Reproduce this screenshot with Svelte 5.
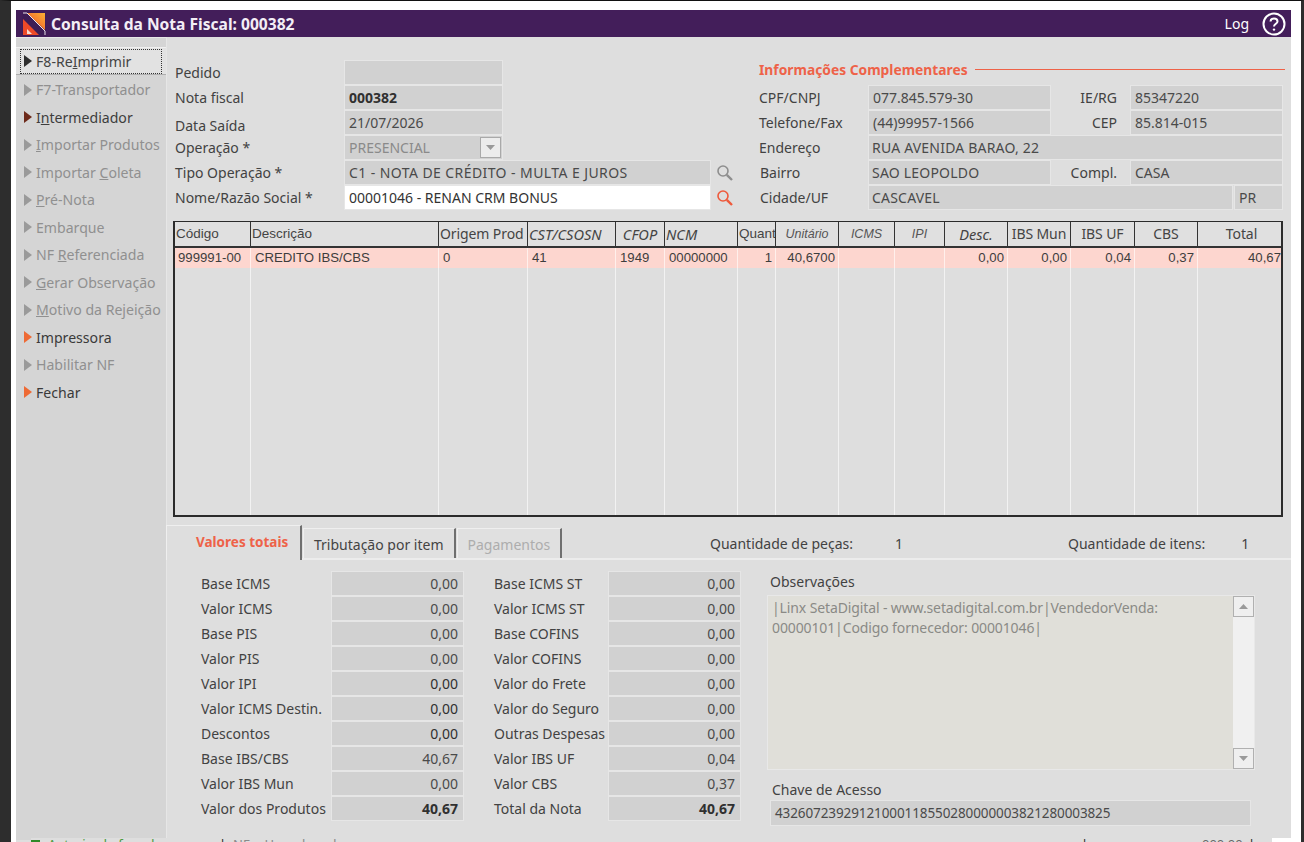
<script>
	const sideItems = [
		{ pre: "F8-Re", u: "I", label: "mprimir", state: "focus" },
		{ label: "F7-Transportador", state: "off" },
		{ pre: "I", u: "n", label: "termediador", state: "dark" },
		{ u: "I", label: "mportar Produtos", state: "off" },
		{ pre: "Importar ", u: "C", label: "oleta", state: "off" },
		{ u: "P", label: "ré-Nota", state: "off" },
		{ label: "Embarque", state: "off" },
		{ pre: "NF ", u: "R", label: "eferenciada", state: "off" },
		{ u: "G", label: "erar Observação", state: "off" },
		{ u: "M", label: "otivo da Rejeição", state: "off" },
		{ label: "Impressora", state: "on" },
		{ label: "Habilitar NF", state: "off" },
		{ label: "Fechar", state: "on" }
	];

	const columns = [
		{ name: "Código", w: 76, cls: "left" },
		{ name: "Descrição", w: 188, cls: "left" },
		{ name: "Origem Prod", w: 89, cls: "left wide-font" },
		{ name: "CST/CSOSN", w: 88, cls: "left it wide-font" },
		{ name: "CFOP", w: 49, cls: "it wide-font" },
		{ name: "NCM", w: 73, cls: "left it wide-font" },
		{ name: "Quant", w: 38, cls: "left" },
		{ name: "Unitário", w: 63, cls: "it thin" },
		{ name: "ICMS", w: 56, cls: "it thin" },
		{ name: "IPI", w: 50, cls: "it thin" },
		{ name: "Desc.", w: 63, cls: "it wide-font" },
		{ name: "IBS Mun", w: 63, cls: "wide-font" },
		{ name: "IBS UF", w: 64, cls: "wide-font" },
		{ name: "CBS", w: 63, cls: "wide-font" },
		{ name: "Total", w: 87, cls: "wide-font" }
	];
	const row = ["999991-00", "CREDITO IBS/CBS", "0", "41", "1949", "00000000", "1", "40,6700", "", "", "0,00", "0,00", "0,04", "0,37", "40,67"];
	const rowAlign = ["l", "l", "l", "l", "l", "l", "r", "r", "r", "r", "r", "r", "r", "r", "r"];

	const totalsA = [
		["Base ICMS", "0,00"], ["Valor ICMS", "0,00"], ["Base PIS", "0,00"], ["Valor PIS", "0,00"], ["Valor IPI", "0,00", "dark"],
		["Valor ICMS Destin.", "0,00", "dark"], ["Descontos", "0,00", "dark"], ["Base IBS/CBS", "40,67"], ["Valor IBS Mun", "0,00"], ["Valor dos Produtos", "40,67", "bold"]
	];
	const totalsB = [
		["Base ICMS ST", "0,00"], ["Valor ICMS ST", "0,00"], ["Base COFINS", "0,00"], ["Valor COFINS", "0,00"], ["Valor do Frete", "0,00"],
		["Valor do Seguro", "0,00"], ["Outras Despesas", "0,00"], ["Valor IBS UF", "0,04"], ["Valor CBS", "0,37"], ["Total da Nota", "40,67", "bold"]
	];
</script>

<div class="screen">
	<span class="desk-left"></span>
	<span class="desk-right"></span>
	<div class="window">
		<header class="titlebar">
			<svg class="logo" width="24" height="24" viewBox="0 0 24 24">
				<defs>
					<linearGradient id="lg" x1="0" y1="1" x2="1" y2="0">
						<stop offset="0" stop-color="#ee4a28"/>
						<stop offset="1" stop-color="#fbb034"/>
					</linearGradient>
				</defs>
				<rect x="0.5" y="0.5" width="23" height="23" fill="#3d1d55"/>
				<path d="M5 1H23V18Z" fill="url(#lg)"/>
				<path d="M1 7L17 23H1Z" fill="#ee4a28"/>
				<path d="M5 17L10 22H5Z" fill="#f6dcd2"/>
				<path d="M1 1H5L23 19V23" fill="none" stroke="#e9e2ea" stroke-width="1"/>
			</svg>
			<span class="title">Consulta da Nota Fiscal: 000382</span>
			<span class="log">Log</span>
			<svg class="help" width="24" height="24" viewBox="0 0 24 24" fill="none" stroke="#fff">
				<circle cx="12" cy="12" r="10.5" stroke-width="2"/>
				<path d="M8.5 9.5C8.5 7.5 10 6.5 12 6.5S15.5 7.7 15.5 9.4C15.5 11.6 12 12 12 14.6" stroke-width="2"/>
				<circle cx="12" cy="17.6" r="1.2" fill="#fff" stroke="none"/>
			</svg>
		</header>

		<div class="body">
			<nav class="side">
				{#each sideItems as item}
					<div class="side-item {item.state}">
						<span class="inner">
							<span class="tri"></span>
							<span>{item.pre ?? ""}{#if item.u}<u>{item.u}</u>{/if}{item.label}</span>
						</span>
					</div>
				{/each}
			</nav>

			<main class="main">
				<section class="top">
					<div class="form-left">
						<span class="lbl">Pedido</span><div class="fld short"></div>
						<span class="lbl">Nota fiscal</span><div class="fld short bold">000382</div>
						<span class="lbl low">Data Saída</span><div class="fld short">21/07/2026</div>
						<span class="lbl">Operação *</span>
						<div class="fld short muted select">PRESENCIAL
							<span class="dd"><svg width="9" height="5" viewBox="0 0 9 5"><path d="M0 0H9L4.5 5Z" fill="#999"/></svg></span>
						</div>
						<span class="lbl">Tipo Operação *</span>
						<div class="fld-wrap">
							<div class="fld wide spaced">C1 - NOTA DE CRÉDITO - MULTA E JUROS</div>
							<svg class="lens" width="18" height="18" viewBox="0 0 18 18" fill="none" stroke="#8e8e8e" stroke-width="1.6">
								<circle cx="7" cy="7" r="5"/><path d="M10.8 10.8L16 16" stroke-width="2.4"/>
							</svg>
						</div>
						<span class="lbl">Nome/Razão Social *</span>
						<div class="fld-wrap">
							<div class="fld wide white">00001046 - RENAN CRM BONUS</div>
							<svg class="lens" width="18" height="18" viewBox="0 0 18 18" fill="none" stroke="#ee5a3c" stroke-width="1.6">
								<circle cx="7" cy="7" r="5"/><path d="M10.8 10.8L16 16" stroke-width="2.4"/>
							</svg>
						</div>
					</div>

					<div class="form-right">
						<div class="info-head"><span>Informações Complementares</span><i></i></div>
						<div class="info-grid">
							<span class="lbl">CPF/CNPJ</span><div class="fld">077.845.579-30</div><span class="lbl r">IE/RG</span><div class="fld">85347220</div>
							<span class="lbl">Telefone/Fax</span><div class="fld">(44)99957-1566</div><span class="lbl r">CEP</span><div class="fld">85.814-015</div>
							<span class="lbl">Endereço</span><div class="fld span3 caps">RUA AVENIDA BARAO, 22</div>
							<span class="lbl ind">Bairro</span><div class="fld caps">SAO LEOPOLDO</div><span class="lbl r">Compl.</span><div class="fld">CASA</div>
							<span class="lbl ind">Cidade/UF</span>
							<div class="span3 city"><div class="fld grow caps">CASCAVEL</div><div class="fld uf">PR</div></div>
						</div>
					</div>
				</section>

				<section class="grid-box">
					<div class="grid-head">
						{#each columns as c}
							<div class="hcell {c.cls ?? ''}" style:width="{c.w}px">{c.name}</div>
						{/each}
					</div>
					<div class="grid-row">
						{#each columns as c, i}
							<div class="cell {rowAlign[i]}" style:width="{c.w}px">{row[i]}</div>
						{/each}
					</div>
					<div class="grid-rest">
						{#each columns as c}
							<div class="rest-col" style:width="{c.w}px"></div>
						{/each}
					</div>
				</section>

				<section class="tabs">
					<div class="tab active">Valores totais</div>
					<div class="tab">Tributação por item</div>
					<div class="tab disabled">Pagamentos</div>
					<div class="qty q1"><span>Quantidade de peças:</span><span>1</span></div>
					<div class="qty q2"><span>Quantidade de itens:</span><span>1</span></div>
				</section>

				<section class="bottom">
					<div class="totals first">
						{#each totalsA as t}
							<span class="lbl">{t[0]}</span><div class="fld num {t[2] ?? ''}">{t[1]}</div>
						{/each}
					</div>
					<div class="totals second">
						{#each totalsB as t}
							<span class="lbl">{t[0]}</span><div class="fld num {t[2] ?? ''}">{t[1]}</div>
						{/each}
					</div>
					<div class="obs">
						<span class="lbl obs-lbl">Observações</span>
						<div class="memo">
							<div class="memo-text">|Linx SetaDigital - www.setadigital.com.br|VendedorVenda:<br>00000101|Codigo fornecedor: 00001046|</div>
							<div class="scroll">
								<span class="sbtn"><svg width="9" height="5" viewBox="0 0 9 5"><path d="M4.5 0L9 5H0Z" fill="#9a9a9a"/></svg></span>
								<span class="strack"></span>
								<span class="sbtn"><svg width="9" height="5" viewBox="0 0 9 5"><path d="M0 0H9L4.5 5Z" fill="#9a9a9a"/></svg></span>
							</div>
						</div>
						<span class="lbl key-lbl">Chave de Acesso</span>
						<div class="fld key">43260723929121000118550280000003821280003825</div>
					</div>
				</section>

				<footer class="status">
					<span class="sq"></span>
					<span class="ok">Autorizado fora do prazo</span>
					<span class="sep">|</span>
					<span class="st-mid">NF-e Homologada</span>
					<span class="sep st-r">|</span>
					<span class="st-val">000,00</span>
					<span class="sep">|</span>
					<span class="st-end"></span>
				</footer>
			</main>
		</div>
	</div>
</div>

<style>
	:global(body) {
		margin: 0;
		background: #fff;
		overflow: hidden;
	}
	.screen {
		position: relative;
		width: 1304px;
		height: 842px;
		box-sizing: border-box;
		border-top: 1px solid #111;
		border-left: 11px solid #2d2d2d;
		border-right: 3px solid #2d2d2d;
		padding: 9px 10px 0 5px;
		overflow: hidden;
		font-family: "Noto Sans", "Open Sans", sans-serif;
		font-size: 14px;
		color: #3f3f3f;
	}
	.desk-left {
		position: absolute;
		left: -11px;
		top: 808px;
		width: 3px;
		height: 22px;
		background: #431e5a;
	}
	.desk-right {
		position: absolute;
		right: -3px;
		top: 820px;
		width: 3px;
		height: 22px;
		background: #431e5a;
	}
	.window {
		height: 832px;
		background: #dedede;
		display: flex;
		flex-direction: column;
	}
	.titlebar {
		height: 27px;
		flex: none;
		background: #431e5a;
		display: flex;
		align-items: center;
		color: #fff;
		padding: 0 6px;
	}
	.logo {
		margin-right: 5px;
		flex: none;
	}
	.title {
		font-weight: 700;
		font-size: 15.6px;
		color: #f3eef6;
	}
	.log {
		margin-left: auto;
		font-size: 14px;
		margin-right: 13px;
	}
	.help {
		margin-right: -1px;
	}
	.body {
		flex: 1;
		display: flex;
		min-height: 0;
	}
	.side {
		width: 150px;
		flex: none;
		background: #d5d5d5;
		padding-top: 9px;
		box-sizing: border-box;
		border-top: 1px solid #e8e8e8;
		margin-bottom: 2px;
	}
	.side-item {
		height: 27.5px;
		display: flex;
		align-items: center;
		padding-left: 8px;
		font-size: 14.1px;
		color: #909090;
		white-space: nowrap;
	}
	.side-item .inner {
		display: flex;
		align-items: center;
		gap: 4px;
	}
	.tri {
		width: 0;
		height: 0;
		border-left: 8px solid #9a9a9a;
		border-top: 6px solid transparent;
		border-bottom: 6px solid transparent;
	}
	.side-item.focus {
		background: #e2e2e2;
		color: #444;
		margin-right: -1px;
		border-bottom: 1px solid #aeaeae;
		border-top: 1px solid #f0f0f0;
		height: 26px;
		margin-bottom: 1px;
		padding-left: 5px;
	}
	.side-item.focus .inner {
		outline: 1px dotted #333;
		padding: 2px 30px 2px 3px;
	}
	.side-item.focus .tri {
		border-left-color: #2e2e2e;
	}
	.side-item.dark {
		color: #3d3d3d;
	}
	.side-item.dark .tri {
		border-left-color: #6d2a1a;
	}
	.side-item.on {
		color: #3a3a3a;
	}
	.side-item.on .tri {
		border-left-color: #ee6a35;
	}
	.main {
		flex: 1;
		min-width: 0;
		padding-left: 2px;
		display: flex;
		flex-direction: column;
		border-left: 1px solid #e6e6e6;
	}
	.top {
		display: flex;
		height: 184px;
		flex: none;
		box-sizing: border-box;
		padding: 23px 0 0 6px;
	}
	.lbl {
		display: block;
		white-space: nowrap;
		color: #424242;
		line-height: 20px;
	}
	.lbl.low {
		padding-top: 7px;
		line-height: 18px;
	}
	.lbl.r {
		text-align: right;
		padding-right: 13px;
	}
	.lbl.ind {
		padding-left: 1px;
	}
	.fld {
		height: 25px;
		line-height: 23px;
		box-sizing: border-box;
		background: #d1d1d1;
		border: 1px solid #e6e6e6;
		padding: 0 4px;
		color: #4a4a4a;
		white-space: nowrap;
		overflow: hidden;
	}
	.bold {
		font-weight: 700;
		color: #303030;
	}
	.dark {
		color: #2f2f2f;
	}
	.caps {
		padding-left: 3px;
		letter-spacing: 0.2px;
	}
	.spaced {
		letter-spacing: 0.42px;
	}
	.form-left {
		width: 584px;
		flex: none;
		display: grid;
		grid-template-columns: 169px 1fr;
		grid-auto-rows: 25px;
		align-items: center;
	}
	.fld.short {
		width: 159px;
	}
	.fld.muted {
		color: #8a8a8a;
	}
	.select {
		position: relative;
	}
	.dd {
		position: absolute;
		top: 1px;
		right: 1px;
		width: 21px;
		height: 21px;
		background: #ececec;
		border: 1px solid #a9a9a9;
		box-sizing: border-box;
		display: flex;
		align-items: center;
		justify-content: center;
	}
	.fld-wrap {
		display: flex;
		align-items: center;
	}
	.fld.wide {
		width: 367px;
	}
	.fld.white {
		background: #fff;
		color: #333;
	}
	.lens {
		margin-left: 5px;
	}
	.form-right {
		width: 526px;
		flex: none;
	}
	.info-head {
		display: flex;
		align-items: center;
		gap: 7px;
		color: #ee6248;
		font-weight: 700;
		font-size: 13.8px;
		height: 21px;
		margin: -1px 0 5px;
		white-space: nowrap;
	}
	.info-head i {
		flex: 1;
		height: 1px;
		background: #ee6248;
	}
	.info-grid {
		display: grid;
		grid-template-columns: 109px 183px 79px 153px;
		grid-auto-rows: 25px;
		align-items: center;
	}
	.span3 {
		grid-column: span 3;
	}
	.city {
		display: flex;
		gap: 1px;
	}
	.grow {
		flex: 1;
	}
	.uf {
		width: 49px;
		flex: none;
	}
	.grid-box {
		margin-left: 4px;
		width: 1110px;
		height: 296px;
		flex: none;
		box-sizing: border-box;
		border: 1px solid #2b2b2b;
		border-width: 1px 2px 2px 2px;
		display: flex;
		flex-direction: column;
		font-family: "Liberation Sans", Arial, sans-serif;
		font-size: 13.2px;
		overflow: hidden;
	}
	.grid-head {
		display: flex;
		flex: none;
		background: #e0e0e0;
		border-bottom: 2px solid #333;
		box-sizing: border-box;
		height: 26px;
	}
	.hcell {
		flex: none;
		box-sizing: border-box;
		border-right: 1px solid #333;
		text-align: center;
		line-height: 24px;
		color: #444;
		white-space: nowrap;
		overflow: hidden;
		font-size: 13.5px;
	}
	.hcell.left {
		text-align: left;
		padding-left: 1px;
	}
	.hcell.wide-font {
		font-family: "Noto Sans", sans-serif;
		font-size: 14px;
		letter-spacing: -0.1px;
	}
	.hcell.it {
		font-style: italic;
		font-size: 14.6px;
		letter-spacing: 0;
	}
	.hcell.thin {
		font-size: 12.5px;
		font-weight: 300;
		color: #555;
	}
	.hcell:last-child {
		border-right: 0;
	}
	.grid-row {
		display: flex;
		height: 20px;
		flex: none;
		background: #fdd6cf;
	}
	.cell {
		flex: none;
		box-sizing: border-box;
		border-right: 1px solid #fff0ec;
		line-height: 20px;
		padding: 0 4px;
		color: #3d3d3d;
		white-space: nowrap;
		overflow: hidden;
	}
	.cell.r {
		text-align: right;
		padding-right: 3px;
	}
	.cell:first-child {
		padding-left: 3px;
		padding-right: 0;
	}
	.grid-rest {
		flex: 1;
		display: flex;
		background: #dedede;
	}
	.rest-col {
		flex: none;
		box-sizing: border-box;
		border-right: 1px solid #f2f2f2;
	}
	.rest-col:last-child {
		border-right: 0;
	}
	.tabs {
		flex: none;
		height: 35px;
		margin-top: 8px;
		margin-left: -3px;
		display: flex;
		align-items: flex-end;
		border-bottom: 2px solid #ececec;
		box-sizing: border-box;
		position: relative;
	}
	.tab {
		height: 30px;
		box-sizing: border-box;
		border-top: 1px solid #efefef;
		border-left: 1px solid #efefef;
		border-right: 2px solid #6f6f6f;
		padding: 0 10px;
		line-height: 31px;
		color: #444;
		margin-right: 1px;
		background: #e0e0e0;
	}
	.tab.active {
		height: 35px;
		width: 136px;
		font-weight: 700;
		font-size: 13.5px;
		color: #ee6248;
		text-align: left;
		padding: 0 0 0 29px;
		line-height: 32px;
		margin-bottom: -2px;
		background: #dedede;
	}
	.tab.disabled {
		color: #adadad;
	}
	.qty {
		position: absolute;
		top: 9px;
		display: flex;
		color: #424242;
		line-height: 20px;
		white-space: nowrap;
	}
	.q1 {
		left: 544px;
		gap: 42px;
	}
	.q2 {
		left: 902px;
		gap: 36px;
	}
	.bottom {
		flex: 1;
		display: flex;
		padding: 11px 0 0 32px;
		min-height: 0;
	}
	.totals {
		display: grid;
		grid-auto-rows: 25px;
		align-items: center;
		flex: none;
		align-self: flex-start;
	}
	.totals.first {
		grid-template-columns: 130px 133px;
		margin-right: 30px;
	}
	.totals.second {
		grid-template-columns: 114px 133px;
		margin-right: 26px;
	}
	.num {
		text-align: right;
		padding-right: 5px;
	}
	.obs {
		flex: none;
		width: 490px;
		display: flex;
		flex-direction: column;
	}
	.obs-lbl {
		margin-left: 3px;
		line-height: 22px;
	}
	.memo {
		height: 175px;
		background: #e0dfd9;
		border: 1px solid #e8e8e8;
		box-sizing: border-box;
		width: 488px;
		display: flex;
		margin-top: 2px;
	}
	.memo-text {
		flex: 1;
		padding: 2px 4px;
		line-height: 20px;
		color: #8a8a86;
		white-space: nowrap;
		letter-spacing: -0.12px;
	}
	.scroll {
		width: 21px;
		flex: none;
		display: flex;
		flex-direction: column;
		background: #f0f0f0;
	}
	.sbtn {
		height: 21px;
		flex: none;
		background: #efefef;
		border: 1px solid #b0b0b0;
		box-sizing: border-box;
		display: flex;
		align-items: center;
		justify-content: center;
	}
	.strack {
		flex: 1;
	}
	.key-lbl {
		margin-left: 5px;
		margin-top: 10px;
		line-height: 20px;
	}
	.fld.key {
		width: 481px;
		height: 26px;
		margin-left: 3px;
		padding-left: 4px;
		font-size: 13.5px;
		line-height: 24px;
		letter-spacing: -0.1px;
	}
	.status {
		flex: none;
		height: 4px;
		display: flex;
		align-items: flex-start;
		overflow: hidden;
		font-size: 13px;
		line-height: 12px;
		margin-left: -138px;
		position: relative;
		white-space: nowrap;
		color: #555;
		background: #dedede;
	}
	.sq {
		width: 9px;
		height: 9px;
		background: #2f8a2a;
		margin: 2px 8px 0 0;
		flex: none;
	}
	.ok {
		width: 171px;
		flex: none;
		color: #4a9a3a;
	}
	.sep {
		color: #222;
		width: 14px;
		flex: none;
	}
	.st-mid {
		width: 120px;
		flex: none;
		color: #8a8a8a;
	}
	.st-r {
		margin-left: 728px;
		width: 121px;
	}
	.st-val {
		width: 46px;
		flex: none;
		color: #666;
	}
	.st-end {
		margin-left: auto;
		width: 19px;
		height: 4px;
		background: #fff;
		flex: none;
	}
</style>
